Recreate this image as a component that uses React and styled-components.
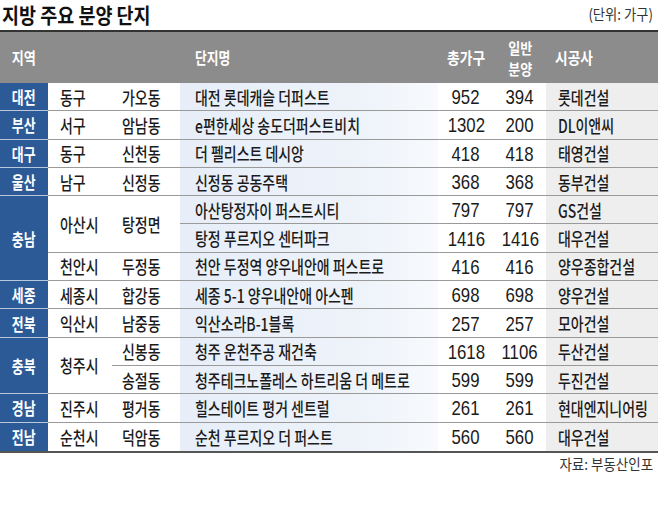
import React from 'react';
import styled, { createGlobalStyle } from 'styled-components';

const KR = `"Noto Sans CJK KR", "Noto Sans", sans-serif`;
const NUM = `"Liberation Sans", Arial, sans-serif`;

const Global = createGlobalStyle`
  html, body { margin: 0; padding: 0; background: #ffffff; }
  body { font-family: ${KR}; color: #1b1b1b; }
`;

const Page = styled.div`
  width: 658px;
  height: 516px;
  display: flex;
  flex-direction: column;
  background: #fff;
`;

const TitleBar = styled.div`
  height: 30px;
  box-sizing: border-box;
  padding: 0 5px 3px 2px;
  display: flex;
  align-items: center;
  justify-content: space-between;
`;

const Squeeze = styled.span`
  display: inline-block;
  white-space: nowrap;
  transform: scaleX(${(p) => p.$scale ?? 0.775});
  transform-origin: ${(p) => p.$origin ?? 'left'} center;
`;

const Title = styled.h1`
  margin: 0;
  font-family: ${KR};
  font-size: 21px;
  line-height: 24px;
  font-weight: 700;
  color: #111;
`;

const Unit = styled.div`
  font-family: ${KR};
  font-size: 15px;
  line-height: 18px;
  color: #333;
  display: flex;
  justify-content: flex-end;
`;

const Table = styled.div`
  display: grid;
  grid-template-columns: 48px 64px 68px 258px 56px 52px 112px;
  grid-template-rows: 51px;
  grid-auto-rows: 28.3px;
  border-top: 2px solid #333;
  border-bottom: 2px solid #555;
`;

const Head = styled.div`
  grid-column: span ${(p) => p.$span ?? 1};
  background: #8c8c8c;
  color: #fff;
  font-family: ${KR};
  font-weight: 700;
  font-size: 16px;
  line-height: 19px;
  display: flex;
  flex-direction: column;
  align-items: ${(p) => (p.$center ? 'center' : 'flex-start')};
  justify-content: center;
  padding-left: ${(p) => p.$pl ?? 0}px;
`;

const HeadLine = styled.span`
  display: block;
  font-size: 14.5px;
  line-height: 21px;
`;

const cellBase = `
  display: flex;
  align-items: center;
  box-sizing: border-box;
  line-height: 1;
  overflow: visible;
`;

const RegionCell = styled.div`
  ${cellBase}
  grid-row: span ${(p) => p.$span ?? 1};
  justify-content: center;
  background: #2c5a97;
  color: #fff;
  font-family: ${KR};
  font-weight: 700;
  font-size: 17px;
  border-bottom: ${(p) => (p.$last ? 'none' : '1px solid #b9c8dc')};
`;

const PlainCell = styled.div`
  ${cellBase}
  grid-row: span ${(p) => p.$span ?? 1};
  padding-left: ${(p) => p.$pl}px;
  background: #fff;
  font-family: ${KR};
  font-size: 18px;
  font-weight: 500;
  color: #1b1b1b;
  border-bottom: ${(p) => (p.$last ? 'none' : '1px solid #9a9a9a')};
`;

const NameCell = styled.div`
  ${cellBase}
  padding-left: 15px;
  background: linear-gradient(to right, #e7eef8 0%, #eef3fa 70%, #f8fafd 100%);
  font-family: ${KR};
  font-size: 18px;
  font-weight: 500;
  color: #1b1b1b;
  border-bottom: ${(p) => (p.$last ? 'none' : '1px solid #9a9a9a')};
`;

const NumCell = styled.div`
  ${cellBase}
  justify-content: center;
  background: #fff;
  font-family: ${NUM};
  font-size: 21px;
  color: #1b1b1b;
  border-bottom: ${(p) => (p.$last ? 'none' : '1px solid #9a9a9a')};
`;

const BuilderCell = styled.div`
  ${cellBase}
  padding-left: 12px;
  background: #eeeeee;
  font-family: ${KR};
  font-size: 18px;
  font-weight: 500;
  color: #1b1b1b;
  border-bottom: ${(p) => (p.$last ? 'none' : '1px solid #9a9a9a')};
`;

const Source = styled.div`
  height: 22px;
  padding-right: 5px;
  display: flex;
  align-items: center;
  justify-content: flex-end;
  font-family: ${KR};
  font-size: 15px;
  color: #333;
`;

const rows = [
  { region: '대전', si: '동구', dong: '가오동', name: '대전 롯데캐슬 더퍼스트', total: '952', sale: '394', builder: '롯데건설' },
  { region: '부산', si: '서구', dong: '암남동', name: 'e편한세상 송도더퍼스트비치', total: '1302', sale: '200', builder: 'DL이앤씨' },
  { region: '대구', si: '동구', dong: '신천동', name: '더 펠리스트 데시앙', total: '418', sale: '418', builder: '태영건설' },
  { region: '울산', si: '남구', dong: '신정동', name: '신정동 공동주택', total: '368', sale: '368', builder: '동부건설' },
  { region: '충남', regionSpan: 3, si: '아산시', siSpan: 2, dong: '탕정면', dongSpan: 2, name: '아산탕정자이 퍼스트시티', total: '797', sale: '797', builder: 'GS건설' },
  { name: '탕정 푸르지오 센터파크', total: '1416', sale: '1416', builder: '대우건설' },
  { si: '천안시', dong: '두정동', name: '천안 두정역 양우내안애 퍼스트로', total: '416', sale: '416', builder: '양우종합건설' },
  { region: '세종', si: '세종시', dong: '합강동', name: '세종 5-1 양우내안애 아스펜', total: '698', sale: '698', builder: '양우건설' },
  { region: '전북', si: '익산시', dong: '남중동', name: '익산소라B-1블록', total: '257', sale: '257', builder: '모아건설' },
  { region: '충북', regionSpan: 2, si: '청주시', siSpan: 2, dong: '신봉동', name: '청주 운천주공 재건축', total: '1618', sale: '1106', builder: '두산건설' },
  { dong: '송절동', name: '청주테크노폴레스 하트리움 더 메트로', total: '599', sale: '599', builder: '두진건설' },
  { region: '경남', si: '진주시', dong: '평거동', name: '힐스테이트 평거 센트럴', total: '261', sale: '261', builder: '현대엔지니어링' },
  { region: '전남', si: '순천시', dong: '덕암동', name: '순천 푸르지오 더 퍼스트', total: '560', sale: '560', builder: '대우건설' },
];

export default function App() {
  const lastIdx = rows.length - 1;
  return (
    <Page>
      <Global />
      <TitleBar>
        <Title>
          <Squeeze $scale={0.88}>지방 주요 분양 단지</Squeeze>
        </Title>
        <Unit>
          <Squeeze $scale={0.885} $origin="right">(단위: 가구)</Squeeze>
        </Unit>
      </TitleBar>
      <Table>
        <Head $center>
          <Squeeze $scale={0.82} $origin="center">지역</Squeeze>
        </Head>
        <Head $span={2} />
        <Head $pl={15}>
          <Squeeze $scale={0.8}>단지명</Squeeze>
        </Head>
        <Head $center>
          <Squeeze $scale={0.86} $origin="center">총가구</Squeeze>
        </Head>
        <Head $center>
          <HeadLine>
            <Squeeze $scale={0.9} $origin="center">일반</Squeeze>
          </HeadLine>
          <HeadLine>
            <Squeeze $scale={0.9} $origin="center">분양</Squeeze>
          </HeadLine>
        </Head>
        <Head $pl={9}>
          <Squeeze $scale={0.86}>시공사</Squeeze>
        </Head>

        {rows.map((r, i) => {
          const endsLast = (span) => i + (span ?? 1) - 1 === lastIdx;
          return (
            <React.Fragment key={i}>
              {r.region && (
                <RegionCell $span={r.regionSpan} $last={endsLast(r.regionSpan)}>
                  <Squeeze $scale={0.76} $origin="center">{r.region}</Squeeze>
                </RegionCell>
              )}
              {r.si && (
                <PlainCell $pl={12} $span={r.siSpan} $last={endsLast(r.siSpan)}>
                  <Squeeze>{r.si}</Squeeze>
                </PlainCell>
              )}
              {r.dong && (
                <PlainCell $pl={10} $span={r.dongSpan} $last={endsLast(r.dongSpan)}>
                  <Squeeze>{r.dong}</Squeeze>
                </PlainCell>
              )}
              <NameCell $last={i === lastIdx}>
                <Squeeze>{r.name}</Squeeze>
              </NameCell>
              <NumCell $last={i === lastIdx}>
                <Squeeze $scale={0.8} $origin="center">{r.total}</Squeeze>
              </NumCell>
              <NumCell $last={i === lastIdx}>
                <Squeeze $scale={0.8} $origin="center">{r.sale}</Squeeze>
              </NumCell>
              <BuilderCell $last={i === lastIdx}>
                <Squeeze>{r.builder}</Squeeze>
              </BuilderCell>
            </React.Fragment>
          );
        })}
      </Table>
      <Source>
        <Squeeze $scale={0.9} $origin="right">자료: 부동산인포</Squeeze>
      </Source>
    </Page>
  );
}
